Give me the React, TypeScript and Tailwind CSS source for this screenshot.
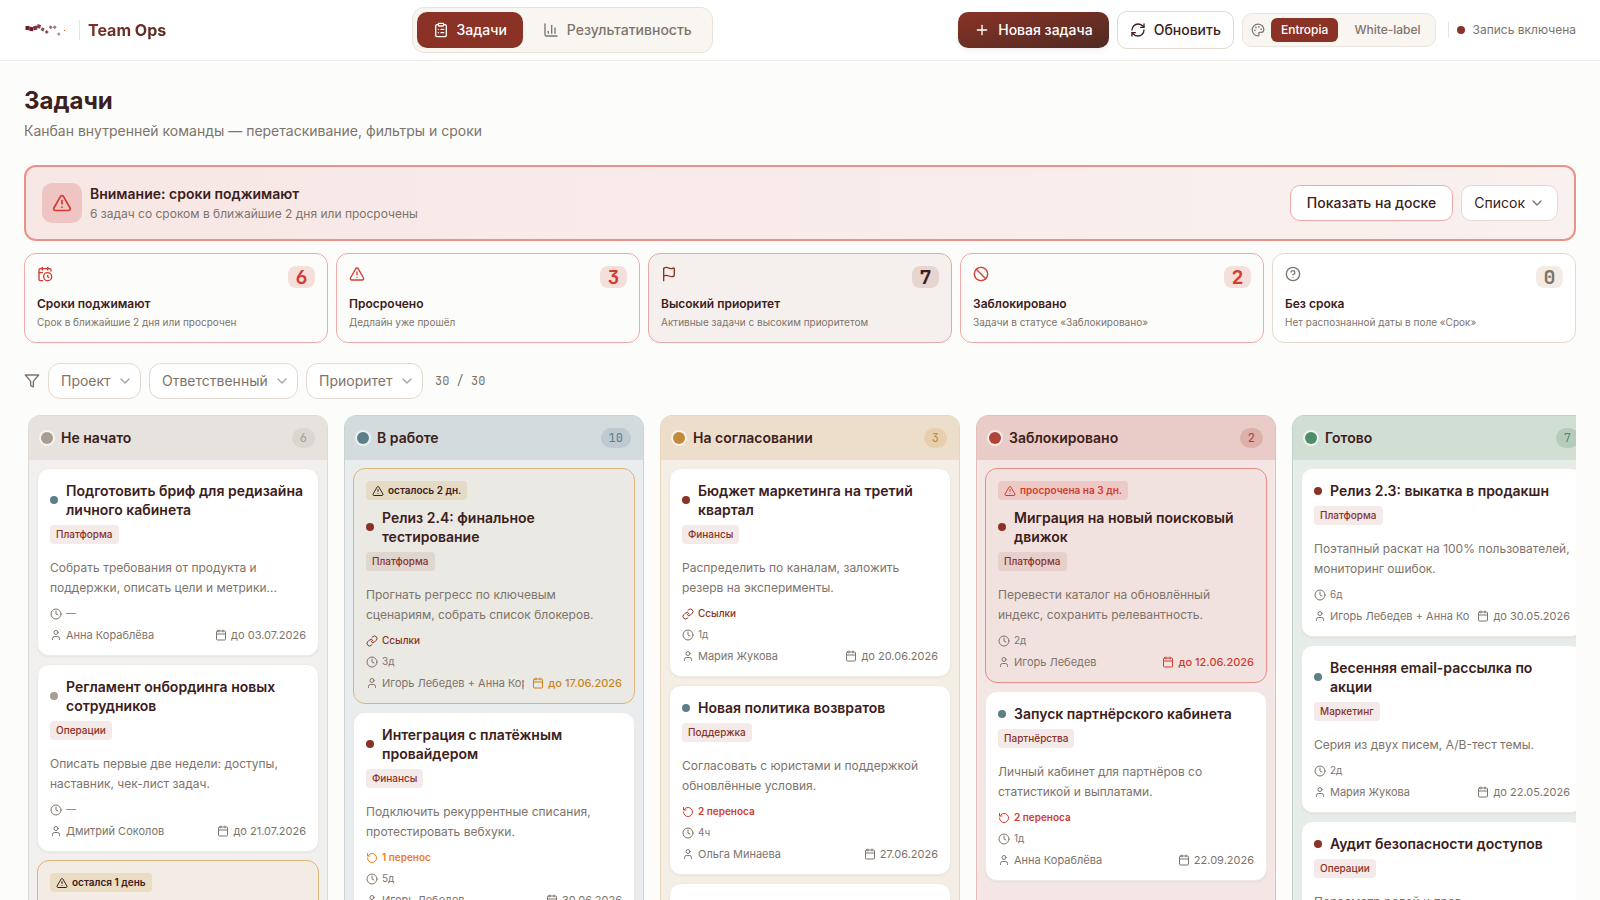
import { useState } from "react";
import {
  Ban,
  Calendar,
  CalendarClock,
  ChartColumn,
  ChevronDown,
  CircleHelp,
  ClipboardList,
  Clock,
  Flag,
  Link,
  Palette,
  Plus,
  RefreshCw,
  RotateCcw,
  TriangleAlert,
  User,
} from "lucide-react";
import clsx from "clsx";

type Priority = "high" | "medium" | "low";

interface Task {
  title: string;
  priority: Priority;
  project: string;
  text: string;
  links?: boolean;
  moves?: string;
  movesHot?: boolean;
  effort: string;
  owner: string;
  due: string;
  alert?: string;
  alertKind?: "warn" | "late";
}

interface Column {
  title: string;
  count: number;
  frame: string;
  head: string;
  dot: string;
  badge: string;
  tasks: Task[];
}

const priorityDot: Record<Priority, string> = {
  high: "bg-[#8b3226]",
  medium: "bg-[#5c7f8a]",
  low: "bg-[#a89d92]",
};

const columns: Column[] = [
  {
    title: "Не начато",
    count: 6,
    frame: "bg-[#f2f0ee] border-[#dedbd7]",
    head: "bg-[#e6e2dd]",
    dot: "bg-[#a89d92]",
    badge: "bg-[#dad6d0] text-[#a89d92]",
    tasks: [
      {
        title: "Подготовить бриф для редизайна личного кабинета",
        priority: "medium",
        project: "Платформа",
        text: "Собрать требования от продукта и поддержки, описать цели и метрики…",
        effort: "—",
        owner: "Анна Кораблёва",
        due: "до 03.07.2026",
      },
      {
        title: "Регламент онбординга новых сотрудников",
        priority: "low",
        project: "Операции",
        text: "Описать первые две недели: доступы, наставник, чек-лист задач.",
        effort: "—",
        owner: "Дмитрий Соколов",
        due: "до 21.07.2026",
      },
      {
        title: "Сверка актов",
        priority: "high",
        project: "Финансы",
        text: "Собрать акты за квартал.",
        effort: "1д",
        owner: "Ольга Минаева",
        due: "до 16.06.2026",
        alert: "остался 1 день",
        alertKind: "warn",
      },
    ],
  },
  {
    title: "В работе",
    count: 10,
    frame: "bg-[#e9edee] border-[#c8d4d4]",
    head: "bg-[#d3dbdd]",
    dot: "bg-[#5c7f8a]",
    badge: "bg-[#bdcacf] text-[#5c7f8a]",
    tasks: [
      {
        title: "Релиз 2.4: финальное тестирование",
        priority: "high",
        project: "Платформа",
        text: "Прогнать регресс по ключевым сценариям, собрать список блокеров.",
        links: true,
        effort: "3д",
        owner: "Игорь Лебедев + Анна Кораблёва",
        due: "до 17.06.2026",
        alert: "осталось 2 дн.",
        alertKind: "warn",
      },
      {
        title: "Интеграция с платёжным провайдером",
        priority: "high",
        project: "Финансы",
        text: "Подключить рекуррентные списания, протестировать вебхуки.",
        moves: "1 перенос",
        effort: "5д",
        owner: "Игорь Лебедев",
        due: "30.06.2026",
      },
    ],
  },
  {
    title: "На согласовании",
    count: 3,
    frame: "bg-[#f5eee4] border-[#e8d5bb]",
    head: "bg-[#eddecb]",
    dot: "bg-[#c48a3a]",
    badge: "bg-[#e5cfaf] text-[#c48a3a]",
    tasks: [
      {
        title: "Бюджет маркетинга на третий квартал",
        priority: "high",
        project: "Финансы",
        text: "Распределить по каналам, заложить резерв на эксперименты.",
        links: true,
        effort: "1д",
        owner: "Мария Жукова",
        due: "до 20.06.2026",
      },
      {
        title: "Новая политика возвратов",
        priority: "medium",
        project: "Поддержка",
        text: "Согласовать с юристами и поддержкой обновлённые условия.",
        moves: "2 переноса",
        movesHot: true,
        effort: "4ч",
        owner: "Ольга Минаева",
        due: "27.06.2026",
      },
      {
        title: "Макеты рассылки",
        priority: "low",
        project: "Маркетинг",
        text: "Согласовать шаблоны писем.",
        effort: "2д",
        owner: "Мария Жукова",
        due: "до 02.07.2026",
      },
    ],
  },
  {
    title: "Заблокировано",
    count: 2,
    frame: "bg-[#f3e6e4] border-[#e4bebb]",
    head: "bg-[#e9ccc8]",
    dot: "bg-[#b04438]",
    badge: "bg-[#ddb0aa] text-[#b04438]",
    tasks: [
      {
        title: "Миграция на новый поисковый движок",
        priority: "high",
        project: "Платформа",
        text: "Перевести каталог на обновлённый индекс, сохранить релевантность.",
        effort: "2д",
        owner: "Игорь Лебедев",
        due: "до 12.06.2026",
        alert: "просрочена на 3 дн.",
        alertKind: "late",
      },
      {
        title: "Запуск партнёрского кабинета",
        priority: "medium",
        project: "Партнёрства",
        text: "Личный кабинет для партнёров со статистикой и выплатами.",
        moves: "2 переноса",
        movesHot: true,
        effort: "1д",
        owner: "Анна Кораблёва",
        due: "22.09.2026",
      },
    ],
  },
  {
    title: "Готово",
    count: 7,
    frame: "bg-[#e6ede9] border-[#bed3c7]",
    head: "bg-[#d1ded4]",
    dot: "bg-[#4f8c6a]",
    badge: "bg-[#b5ccbd] text-[#4f8c6a]",
    tasks: [
      {
        title: "Релиз 2.3: выкатка в продакшн",
        priority: "high",
        project: "Платформа",
        text: "Поэтапный раскат на 100% пользователей, мониторинг ошибок.",
        effort: "6д",
        owner: "Игорь Лебедев + Анна Кораблёва",
        due: "до 30.05.2026",
      },
      {
        title: "Весенняя email-рассылка по акции",
        priority: "medium",
        project: "Маркетинг",
        text: "Серия из двух писем, A/B-тест темы.",
        effort: "2д",
        owner: "Мария Жукова",
        due: "до 22.05.2026",
      },
      {
        title: "Аудит безопасности доступов",
        priority: "high",
        project: "Операции",
        text: "Пересмотр ролей и прав.",
        effort: "3д",
        owner: "Дмитрий Соколов",
        due: "до 15.05.2026",
      },
    ],
  },
];

const stats = [
  {
    icon: CalendarClock,
    title: "Сроки поджимают",
    text: "Срок в ближайшие 2 дня или просрочен",
    value: 6,
    card: "border-[#eeaaa6]",
    iconColor: "text-[#d23b30]",
    badge: "bg-[#f5dfdb] text-[#d23b30]",
  },
  {
    icon: TriangleAlert,
    title: "Просрочено",
    text: "Дедлайн уже прошёл",
    value: 3,
    card: "border-[#eeaaa6]",
    iconColor: "text-[#d23b30]",
    badge: "bg-[#f5dfdb] text-[#d23b30]",
  },
  {
    icon: Flag,
    title: "Высокий приоритет",
    text: "Активные задачи с высоким приоритетом",
    value: 7,
    card: "border-[#e2aaa5] bg-[#f5f0ee]",
    iconColor: "text-[#8b3226]",
    badge: "bg-[#e6d5d0] text-[#3b201b]",
  },
  {
    icon: Ban,
    title: "Заблокировано",
    text: "Задачи в статусе «Заблокировано»",
    value: 2,
    card: "border-[#eeaaa6]",
    iconColor: "text-[#d23b30]",
    badge: "bg-[#f5dfdb] text-[#d23b30]",
  },
  {
    icon: CircleHelp,
    title: "Без срока",
    text: "Нет распознанной даты в поле «Срок»",
    value: 0,
    card: "border-[#e2d9d0] bg-white",
    iconColor: "text-[#7d746b]",
    badge: "bg-[#f4ece4] text-[#7d746b]",
  },
];

const mono = "font-['JetBrains_Mono','Liberation_Mono',monospace]";

const Logo = () => (
  <svg width="43" height="20" viewBox="0 0 43 20" aria-hidden="true">
    <g fill="#701a2a">
      <rect x="1.5" y="6" width="4" height="4" />
      <rect x="5.4" y="7" width="4" height="4" transform="rotate(6 7 9)" />
      <rect x="9.4" y="6" width="3.8" height="4" transform="rotate(-12 11 8)" opacity="0.9" />
      <rect x="13.2" y="4.6" width="3.6" height="3.6" transform="rotate(20 15 6)" opacity="0.85" />
      <rect x="17.4" y="8" width="3" height="3" transform="rotate(30 19 9)" opacity="0.8" />
      <rect x="21.4" y="10.8" width="2.8" height="2.8" transform="rotate(45 23 12)" opacity="0.8" />
      <rect x="25.2" y="5.8" width="2.8" height="2.8" transform="rotate(45 26.7 7.3)" opacity="0.65" />
      <rect x="29.2" y="5.8" width="2.8" height="2.8" transform="rotate(45 30.7 7.3)" opacity="0.6" />
      <rect x="33.4" y="12.8" width="2.6" height="2.6" transform="rotate(45 34.8 14.2)" opacity="0.5" />
    </g>
    <rect x="40" y="10" width="1" height="1" fill="#e0452f" />
  </svg>
);

const FilterIcon = () => (
  <svg
    className="size-4 text-[#7d746b]"
    viewBox="0 0 24 24"
    fill="none"
    stroke="currentColor"
    strokeWidth="2"
    strokeLinecap="round"
    strokeLinejoin="round"
    aria-hidden="true"
  >
    <polygon points="22 3 2 3 10 12.46 10 19 14 21 14 12.46 22 3" />
  </svg>
);

const FilterSelect = ({ label }: { label: string }) => (
  <div className="relative">
    <select
      aria-label={label}
      className="h-9 appearance-none rounded-xl border border-[#e2d9d0] bg-white pl-3 pr-[29px] text-sm text-[#7d746b]"
    >
      <option>{label}</option>
    </select>
    <ChevronDown className="pointer-events-none absolute right-2 top-2.5 size-4 text-[#a9a29a]" />
  </div>
);

const TaskCard = ({ task }: { task: Task }) => {
  const late = task.alertKind === "late";
  return (
    <article
      className={clsx(
        "rounded-xl border p-3",
        !task.alert && "border-[#efeae6] bg-white shadow-xs",
        task.alert && !late && "border-[#dcb57a] bg-[#f0d9ad]/15",
        late && "border-[#e38f87] bg-[#efdcd7]/40"
      )}
    >
      {task.alert && (
        <div
          className={clsx(
            "mb-2 flex h-[19px] w-fit items-center gap-1 rounded px-1.5 text-[10px] font-semibold",
            late ? "bg-[#eecac6] text-[#d23b30]" : "bg-[#d9b878]/30 text-[#3b201b]"
          )}
        >
          <TriangleAlert className="size-3" />
          {task.alert}
        </div>
      )}
      <div className="flex items-center gap-2">
        <span className={clsx("size-2 shrink-0 rounded-full", priorityDot[task.priority])} />
        <h3 className="text-sm leading-[19px] font-semibold">{task.title}</h3>
      </div>
      <div className="mt-1.5 flex h-[19px] w-fit items-center rounded bg-[#8b3226]/10 px-1.5 text-[10px] font-medium text-[#8b3226]">
        {task.project}
      </div>
      <p className="mt-3.5 line-clamp-2 text-xs leading-5 text-[#7d746b]">{task.text}</p>
      <div className="mt-2 flex flex-col gap-1.5 text-[10px] leading-[15px] text-[#7d746b]">
        {task.links && (
          <a href="#links" className="flex items-center gap-1 font-medium text-[#8b3226]">
            <Link className="size-3" />
            Ссылки
          </a>
        )}
        {task.moves && (
          <div
            className={clsx(
              "flex items-center gap-1 font-semibold",
              task.movesHot ? "text-[#d23b30]" : "text-[#f07a24]"
            )}
          >
            <RotateCcw className="size-3" />
            {task.moves}
          </div>
        )}
        <div className="flex items-center gap-1">
          <Clock className="size-3" />
          {task.effort}
        </div>
        <div className="flex items-center justify-between gap-2 text-[11px] leading-4">
          <div className="flex min-w-0 items-center gap-1">
            <User className="size-3 shrink-0" />
            <span className="overflow-hidden whitespace-nowrap">{task.owner}</span>
          </div>
          <div
            className={clsx(
              "flex shrink-0 items-center gap-1",
              task.alert && "font-medium",
              task.alert && (late ? "text-[#d23b30]" : "text-[#c8841f]")
            )}
          >
            <Calendar className="size-3" />
            {task.due}
          </div>
        </div>
      </div>
    </article>
  );
};

const BoardColumn = ({ column }: { column: Column }) => (
  <section
    className={clsx("w-[300px] shrink-0 overflow-hidden rounded-xl border", column.frame)}
  >
    <header className={clsx("flex items-center gap-2 p-3", column.head)}>
      <span className={clsx("size-3 rounded-full ring-2 ring-white/60", column.dot)} />
      <h2 className="flex-1 text-sm font-semibold">{column.title}</h2>
      <span className={clsx("rounded-full px-2 py-0.5 text-xs", mono, column.badge)}>
        {column.count}
      </span>
    </header>
    <div className="flex flex-col gap-2 p-2">
      {column.tasks.map((task) => (
        <TaskCard key={task.title} task={task} />
      ))}
    </div>
  </section>
);

const Header = () => {
  const [theme, setTheme] = useState<string>("Entropia");
  return (
    <header className="flex h-[61px] shrink-0 items-center justify-between border-b border-[#eeece9] bg-white px-6">
      <div className="flex items-center gap-3">
        <Logo />
        <div className="flex h-5 items-center border-l border-[#e9e5e1] pl-2">
          <span className="bg-linear-to-br from-[#8b3226] to-[#4f2a22] bg-clip-text font-bold text-transparent">
            Team Ops
          </span>
        </div>
      </div>

      <nav className="flex gap-1 rounded-xl border border-[#ebe2dc] bg-[#f9f6f2] p-1 text-sm font-medium">
        <a
          href="#tasks"
          aria-current="page"
          className="flex h-9 items-center gap-2 rounded-[10px] bg-[#8b3226] px-4 text-white"
        >
          <ClipboardList className="size-4" />
          Задачи
        </a>
        <a href="#results" className="flex h-9 items-center gap-2 px-4 text-[#7d746b]">
          <ChartColumn className="size-4" />
          Результативность
        </a>
      </nav>

      <div className="flex items-center gap-2">
        <button className="flex h-9 items-center gap-2 rounded-[10px] bg-linear-to-br from-[#8b3226] to-[#4f2a22] px-4 text-sm font-medium text-white shadow-md shadow-black/5">
          <Plus className="size-4" />
          Новая задача
        </button>
        <button className="flex h-[38px] items-center gap-2 rounded-[10px] border border-[#e2d9d0] bg-white px-3 text-sm font-medium">
          <RefreshCw className="size-4" />
          Обновить
        </button>
        <div className="flex items-center gap-1.5 rounded-[10px] border border-[#ebe5df] bg-[#f9f6f2] p-1 text-xs font-medium text-[#7d746b]">
          <Palette className="ml-1 size-3.5" />
          {["Entropia", "White-label"].map((name) => (
            <button
              key={name}
              onClick={() => setTheme(name)}
              className={clsx(
                "h-6 rounded-md px-2.5",
                theme === name && "bg-[#8b3226] text-white"
              )}
            >
              {name}
            </button>
          ))}
        </div>
        <div className="ml-1 flex items-center gap-2 border-l border-[#e9e5e1] pl-2 text-xs text-[#7d746b]">
          <span className="size-2 rounded-full bg-[#8b3226]" />
          Запись включена
        </div>
      </div>
    </header>
  );
};

const App = () => {
  return (
    <div className="flex h-screen flex-col overflow-hidden bg-[#fcfcfa] font-['Inter',sans-serif] text-[#3b201b]">
      <Header />
      <main className="flex-1 overflow-hidden px-6 pt-6">
        <h1 className="text-2xl font-bold">Задачи</h1>
        <p className="mt-1 text-sm text-[#7d746b]">
          Канбан внутренней команды — перетаскивание, фильтры и сроки
        </p>

        {/* Deadline alert */}
        <div className="mt-6 flex items-center gap-2 rounded-xl border-2 border-[#e8928a] bg-linear-to-r from-[#f7e7e5] to-[#f9f1ef] p-4">
          <div className="flex size-10 items-center justify-center rounded-[10px] bg-[#efc5c3] text-[#d23b30]">
            <TriangleAlert className="size-5" />
          </div>
          <div className="flex-1">
            <div className="text-sm font-semibold">Внимание: сроки поджимают</div>
            <div className="mt-0.5 text-xs text-[#7d746b]">
              6 задач со сроком в ближайшие 2 дня или просрочены
            </div>
          </div>
          <button className="h-9 rounded-[10px] border border-[#eeaaa6] bg-white px-4 text-sm font-medium">
            Показать на доске
          </button>
          <button className="flex h-9 items-center gap-1 rounded-[10px] border border-[#e2d9d0] bg-white px-3 text-sm">
            Список
            <ChevronDown className="size-4 text-[#7d746b]" />
          </button>
        </div>

        {/* Stats */}
        <div className="mt-3 grid grid-cols-5 gap-2">
          {stats.map(({ icon: Icon, ...stat }) => (
            <button key={stat.title} className={clsx("rounded-xl border p-3 text-left", stat.card)}>
              <div className="flex items-start justify-between">
                <Icon className={clsx("size-4", stat.iconColor)} />
                <span
                  className={clsx(
                    "min-w-[27px] rounded-lg px-1.5 text-center text-xl leading-[22px] font-bold",
                    mono,
                    stat.badge
                  )}
                >
                  {stat.value}
                </span>
              </div>
              <div className="mt-2 text-xs font-semibold">{stat.title}</div>
              <div className="mt-0.5 text-[10px] leading-4 text-[#7d746b]">{stat.text}</div>
            </button>
          ))}
        </div>

        {/* Filters */}
        <div className="mt-5 flex items-center gap-2">
          <FilterIcon />
          <FilterSelect label="Проект" />
          <FilterSelect label="Ответственный" />
          <FilterSelect label="Приоритет" />
          <span className={clsx("ml-1 text-xs text-[#7d746b]", mono)}>30 / 30</span>
        </div>

        {/* Board */}
        <div className="mt-4 flex gap-4 overflow-x-auto px-1">
          {columns.map((column) => (
            <BoardColumn key={column.title} column={column} />
          ))}
        </div>
      </main>
    </div>
  );
};

export default App;
